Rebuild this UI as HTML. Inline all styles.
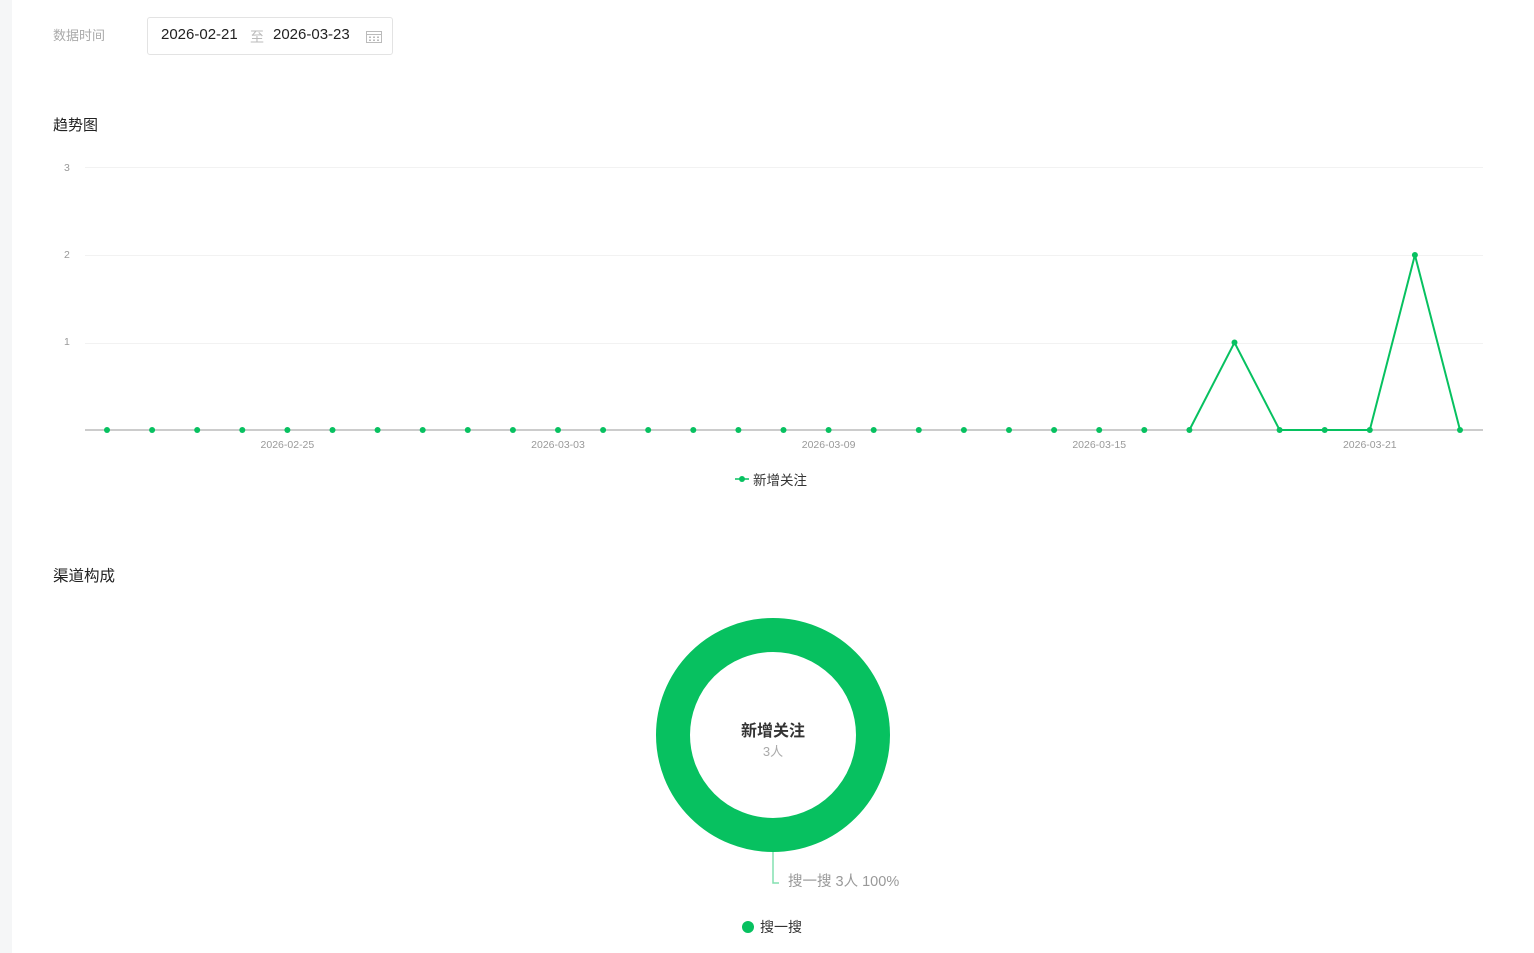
<!DOCTYPE html><html><head><meta charset="utf-8"><style>
body{margin:0;width:1534px;height:953px;background:#fff;font-family:"Liberation Sans","Noto Sans CJK SC",sans-serif;position:relative;overflow:hidden}
.strip{position:absolute;left:0;top:0;width:12px;height:953px;background:#f5f6f7}
.t{position:absolute;white-space:nowrap}
</style></head><body>
<div class="strip"></div>
<div class="t" style="left:53px;top:25px;font-size:13px;color:#aaa">数据时间</div>
<div style="position:absolute;left:147px;top:17px;width:244px;height:36px;border:1px solid #e3e3e3;border-radius:3px"></div>
<div class="t" style="left:161px;top:26px;font-size:15px;color:#222">2026-02-21</div>
<div class="t" style="left:250px;top:27px;font-size:14px;color:#bbb">至</div>
<div class="t" style="left:273px;top:26px;font-size:15px;color:#222">2026-03-23</div>
<svg style="position:absolute;left:366px;top:30px" width="16" height="13" viewBox="0 0 16 13"><rect x="0.5" y="1.5" width="15" height="11" fill="none" stroke="#bbb"/><line x1="0.5" y1="4.5" x2="15.5" y2="4.5" stroke="#bbb"/><g fill="#bbb"><rect x="3" y="6.5" width="2" height="1.5"/><rect x="7" y="6.5" width="2" height="1.5"/><rect x="11" y="6.5" width="2" height="1.5"/><rect x="3" y="9.5" width="2" height="1.5"/><rect x="7" y="9.5" width="2" height="1.5"/><rect x="11" y="9.5" width="2" height="1.5"/></g></svg>
<div class="t" style="left:53px;top:114px;font-size:15px;color:#222">趋势图</div>
<svg style="position:absolute;left:0;top:0" width="1534" height="953">
<g stroke="#f2f2f2"><line x1="85" y1="167.5" x2="1483" y2="167.5"/><line x1="85" y1="255.5" x2="1483" y2="255.5"/><line x1="85" y1="343.5" x2="1483" y2="343.5"/></g>
<line x1="85" y1="430" x2="1483" y2="430" stroke="#bbb" stroke-width="1.5"/>
<g font-size="10.5" fill="#999" font-family="Liberation Sans"><text x="64" y="171">3</text><text x="64" y="258">2</text><text x="64" y="345">1</text>
<g text-anchor="middle"><text x="287.4" y="448">2026-02-25</text><text x="558" y="448">2026-03-03</text><text x="828.6" y="448">2026-03-09</text><text x="1099.2" y="448">2026-03-15</text><text x="1369.8" y="448">2026-03-21</text></g></g>
<polyline fill="none" stroke="#07c160" stroke-width="2" points="1189.4,430 1234.5,342.5 1279.6,430 1369.8,430 1414.9,255 1460,430"/>
<g fill="#07c160">
<circle cx="107" cy="430" r="3"/><circle cx="152.1" cy="430" r="3"/><circle cx="197.2" cy="430" r="3"/><circle cx="242.3" cy="430" r="3"/><circle cx="287.4" cy="430" r="3"/><circle cx="332.5" cy="430" r="3"/><circle cx="377.6" cy="430" r="3"/><circle cx="422.7" cy="430" r="3"/><circle cx="467.8" cy="430" r="3"/><circle cx="512.9" cy="430" r="3"/><circle cx="558" cy="430" r="3"/><circle cx="603.1" cy="430" r="3"/><circle cx="648.2" cy="430" r="3"/><circle cx="693.3" cy="430" r="3"/><circle cx="738.4" cy="430" r="3"/><circle cx="783.5" cy="430" r="3"/><circle cx="828.6" cy="430" r="3"/><circle cx="873.7" cy="430" r="3"/><circle cx="918.8" cy="430" r="3"/><circle cx="963.9" cy="430" r="3"/><circle cx="1009" cy="430" r="3"/><circle cx="1054.1" cy="430" r="3"/><circle cx="1099.2" cy="430" r="3"/><circle cx="1144.3" cy="430" r="3"/><circle cx="1189.4" cy="430" r="3"/><circle cx="1234.5" cy="342.5" r="3"/><circle cx="1279.6" cy="430" r="3"/><circle cx="1324.7" cy="430" r="3"/><circle cx="1369.8" cy="430" r="3"/><circle cx="1414.9" cy="255" r="3"/><circle cx="1460" cy="430" r="3"/>
<circle cx="742" cy="479" r="3"/></g>
<line x1="735" y1="479" x2="749" y2="479" stroke="#07c160" stroke-width="1.5"/>
<circle cx="773" cy="735" r="100" fill="none" stroke="#07c160" stroke-width="34"/>
<polyline fill="none" stroke="#83e0b0" stroke-width="1.5" points="773,852 773,883 779,883"/>
<circle cx="748" cy="927" r="6" fill="#07c160"/>
</svg>
<div class="t" style="left:753px;top:469px;font-size:13.5px;color:#333">新增关注</div>
<div class="t" style="left:53px;top:564px;font-size:15.5px;color:#222">渠道构成</div>
<div class="t" style="left:723px;top:717px;width:100px;text-align:center;font-size:16px;font-weight:bold;color:#333">新增关注</div>
<div class="t" style="left:723px;top:741px;width:100px;text-align:center;font-size:13px;color:#aaa">3人</div>
<div class="t" style="left:788px;top:870px;font-size:14.5px;color:#999">搜一搜 3人 100%</div>
<div class="t" style="left:760px;top:917px;font-size:14px;color:#333">搜一搜</div>
</body></html>
